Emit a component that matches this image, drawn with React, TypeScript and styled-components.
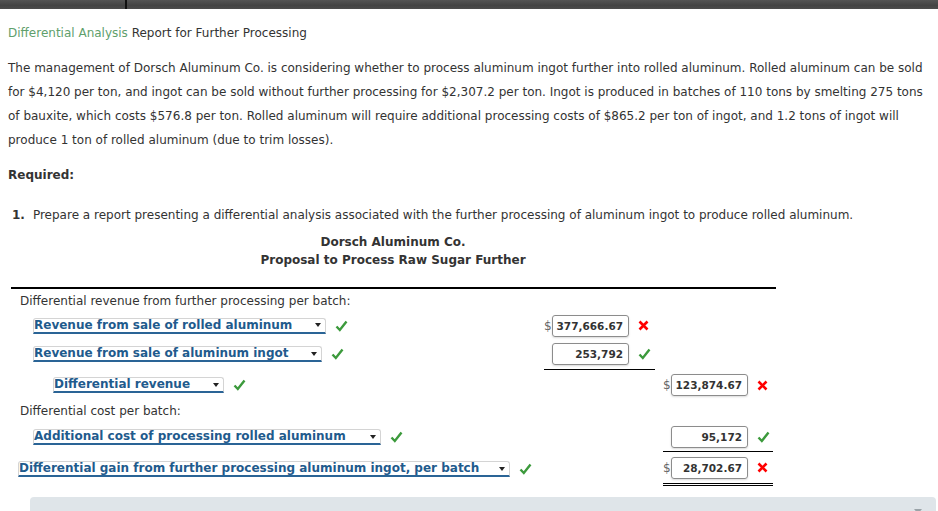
import React from 'react';
import styled, { createGlobalStyle } from 'styled-components';

const GlobalStyle = createGlobalStyle`
  body {
    margin: 0;
    background: #fff;
    font-family: "DejaVu Sans", Verdana, sans-serif;
    font-size: 12px;
    color: #333;
  }
`;

const TopBar = styled.div`
  height: 9px;
  background: linear-gradient(#555, #444 60%, #4d4d4d);
  display: flex;
`;

const TopTab = styled.div`
  width: 125px;
  border-right: 2px solid #111;
`;

const Page = styled.div`
  padding: 12px 8px 0 8px;
`;

const Title = styled.div`
  line-height: 24px;
`;

const Green = styled.span`
  color: #5fa06c;
`;

const Para = styled.p`
  margin: 11px 0 0 0;
  line-height: 24px;
`;

const Required = styled.div`
  margin-top: 11px;
  font-weight: bold;
  line-height: 24px;
`;

const Step = styled.div`
  margin-top: 16px;
  line-height: 24px;
  padding-left: 4px;
  b {
    margin-right: 8px;
  }
`;

const Heading = styled.div`
  margin-top: 6px;
  width: 770px;
  text-align: center;
  font-weight: bold;
  line-height: 18px;
`;

const Table = styled.div`
  margin: 18px 0 0 3px;
  width: 765px;
  border-top: 2px solid #000;
`;

const Row = styled.div<{ $h: number }>`
  display: flex;
  align-items: stretch;
  height: ${(p) => p.$h}px;
`;

const Label = styled.div<{ $indent: number }>`
  width: 533px;
  box-sizing: border-box;
  padding-left: ${(p) => p.$indent}px;
  display: flex;
  align-items: center;
  gap: 9px;
`;

const Cell = styled.div<{ $w: number; $rule?: 'single' | 'double' }>`
  width: ${(p) => p.$w}px;
  display: flex;
  align-items: center;
  border-bottom: ${(p) =>
    p.$rule === 'single' ? '1px solid #000' : p.$rule === 'double' ? '3px double #000' : 'none'};
`;

const Gap = styled.div`
  width: 8px;
`;

const Dollar = styled.span`
  width: 8px;
  color: #666;
`;

const Box = styled.div`
  width: 77px;
  height: 22px;
  box-sizing: border-box;
  border: 1px solid #8c8c8c;
  border-radius: 3px;
  box-shadow: 0 1px 2px rgba(0, 0, 0, 0.15);
  text-align: right;
  padding-right: 5px;
  font-weight: bold;
  font-size: 10.5px;
  line-height: 20px;
  color: #333;
  margin-right: 9px;
`;

const Picker = styled.div<{ $w: number }>`
  width: ${(p) => p.$w}px;
  height: 16px;
  box-sizing: border-box;
  border: 1px solid #d4d4d4;
  border-bottom: 2px solid #2a6496;
  border-radius: 3px 3px 0 0;
  display: flex;
  align-items: center;
  justify-content: space-between;
  color: #1f5b8d;
  font-weight: bold;
  line-height: 13px;
  padding: 0 4px 0 0;
  background: #fff;
`;

const Arrow = styled.span`
  width: 0;
  height: 0;
  border-left: 3px solid transparent;
  border-right: 3px solid transparent;
  border-top: 4px solid #222;
`;

const Bottom = styled.div`
  margin: 11px -6px 0 22px;
  height: 30px;
  background: #dfe5e9;
  border-radius: 4px;
  display: flex;
  justify-content: flex-end;
  padding: 12px 14px 0 0;
  box-sizing: border-box;
`;

const SmallArrow = styled.span`
  width: 0;
  height: 0;
  border-left: 4px solid transparent;
  border-right: 4px solid transparent;
  border-top: 5px solid #9aa3a8;
`;

function Check() {
  return (
    <svg width="13" height="12" viewBox="0 0 13 12">
      <path d="M1.5 6.5 L4.8 10 L11.5 1.5" fill="none" stroke="#3c9a3c" strokeWidth="2.4" />
    </svg>
  );
}

function Cross() {
  return (
    <svg width="11" height="11" viewBox="0 0 11 11">
      <path d="M1.5 1.5 L9.5 9.5 M9.5 1.5 L1.5 9.5" fill="none" stroke="#f00" strokeWidth="2.6" />
    </svg>
  );
}

function Select({ text, w }: { text: string; w: number }) {
  return (
    <Picker $w={w}>
      <span>{text}</span>
      <Arrow />
    </Picker>
  );
}

function Amount({ value, dollar, ok }: { value: string; dollar?: boolean; ok: boolean }) {
  return (
    <>
      <Dollar>{dollar ? '$' : ''}</Dollar>
      <Box>{value}</Box>
      {ok ? <Check /> : <Cross />}
    </>
  );
}

export default function App() {
  return (
    <>
      <GlobalStyle />
      <TopBar>
        <TopTab />
      </TopBar>
      <Page>
        <Title>
          <Green>Differential Analysis</Green> Report for Further Processing
        </Title>
        <Para>
          The management of Dorsch Aluminum Co. is considering whether to process aluminum ingot further into
          rolled aluminum. Rolled aluminum can be sold for $4,120 per ton, and ingot can be sold without further
          processing for $2,307.2 per ton. Ingot is produced in batches of 110 tons by smelting 275 tons of
          bauxite, which costs $576.8 per ton. Rolled aluminum will require additional processing costs of $865.2
          per ton of ingot, and 1.2 tons of ingot will produce 1 ton of rolled aluminum (due to trim losses).
        </Para>
        <Required>Required:</Required>
        <Step>
          <b>1.</b>Prepare a report presenting a differential analysis associated with the further processing of
          aluminum ingot to produce rolled aluminum.
        </Step>
        <Heading>
          Dorsch Aluminum Co.
          <br />
          Proposal to Process Raw Sugar Further
        </Heading>
        <Table>
          <Row $h={24}>
            <Label $indent={9}>Differential revenue from further processing per batch:</Label>
          </Row>
          <Row $h={25}>
            <Label $indent={22}>
              <Select text="Revenue from sale of rolled aluminum" w={293} />
              <Check />
            </Label>
            <Cell $w={111}>
              <Amount value="377,666.67" dollar ok={false} />
            </Cell>
          </Row>
          <Row $h={32}>
            <Label $indent={22}>
              <Select text="Revenue from sale of aluminum ingot" w={289} />
              <Check />
            </Label>
            <Cell $w={111} $rule="single">
              <Amount value="253,792" ok />
            </Cell>
          </Row>
          <Row $h={30}>
            <Label $indent={42}>
              <Select text="Differential revenue" w={171} />
              <Check />
            </Label>
            <Cell $w={111} />
            <Gap />
            <Cell $w={110}>
              <Amount value="123,874.67" dollar ok={false} />
            </Cell>
          </Row>
          <Row $h={22}>
            <Label $indent={9}>Differential cost per batch:</Label>
          </Row>
          <Row $h={30}>
            <Label $indent={22}>
              <Select text="Additional cost of processing rolled aluminum" w={348} />
              <Check />
            </Label>
            <Cell $w={111} />
            <Gap />
            <Cell $w={110} $rule="single">
              <Amount value="95,172" ok />
            </Cell>
          </Row>
          <Row $h={34}>
            <Label $indent={7}>
              <Select text="Differential gain from further processing aluminum ingot, per batch" w={492} />
              <Check />
            </Label>
            <Cell $w={111} />
            <Gap />
            <Cell $w={110} $rule="double">
              <Amount value="28,702.67" dollar ok={false} />
            </Cell>
          </Row>
        </Table>
        <Bottom>
          <SmallArrow />
        </Bottom>
      </Page>
    </>
  );
}
